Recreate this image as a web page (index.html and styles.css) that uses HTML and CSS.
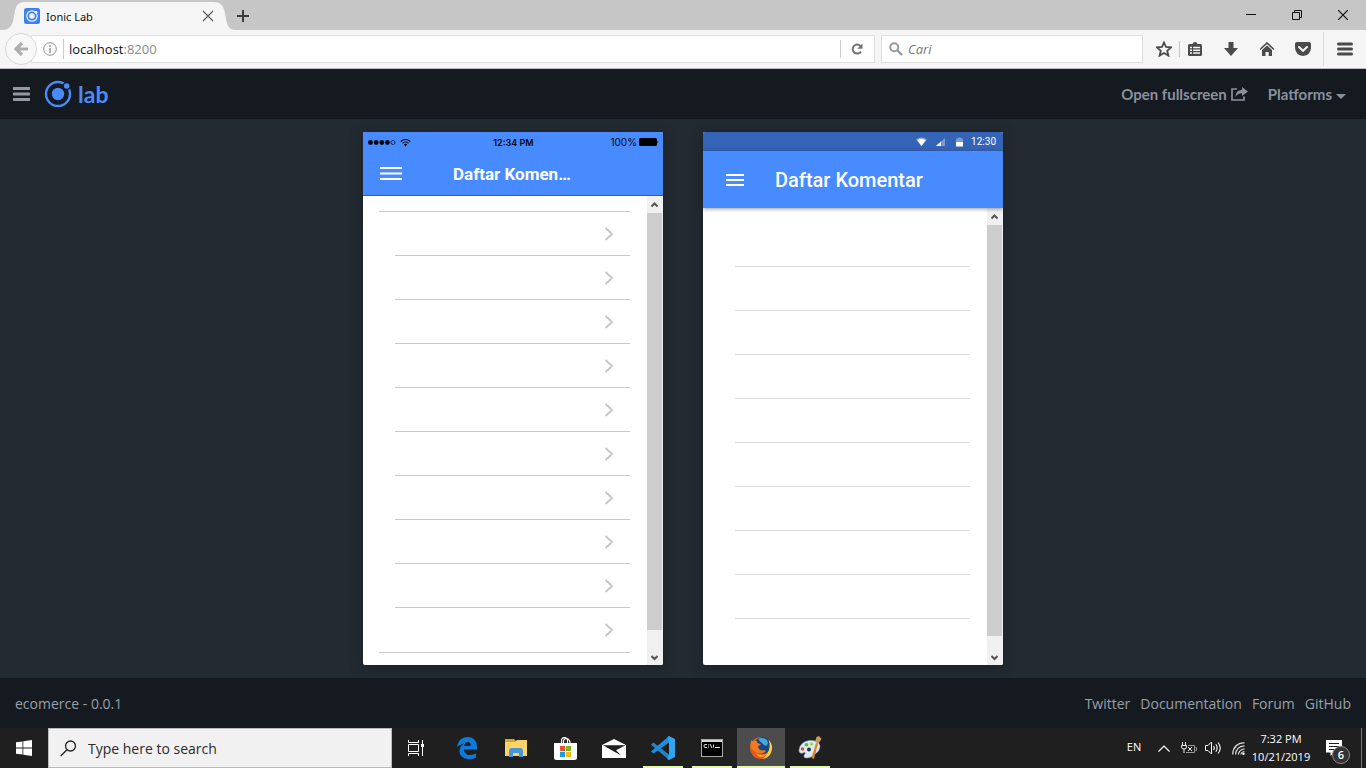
FILE: index.html
```html
<!DOCTYPE html>
<html lang="en">
<head>
<meta charset="utf-8">
<title>Ionic Lab</title>
<link rel="stylesheet" href="styles.css">
</head>
<body>
<div class="screen">
  <header class="browser">
    <div class="tabstrip">
      <div class="tab">
        <svg class="tab-shape" width="236" height="30" viewBox="0 0 236 30"><path d="M0 30C9 30 12 27 13.500 19L15 11C16 5 19 2 25 2H213C220 2 223 5 224.500 11L226 19C227.500 27 230 30 236 30Z" fill="#f5f5f5"/></svg>
        <svg class="favicon" width="16" height="16" viewBox="0 0 16 16"><rect width="16" height="16" rx="2.500" fill="#3b82f0"/><circle cx="8" cy="8" r="5.200" fill="none" stroke="#e4eeff" stroke-width="1.300"/><circle cx="8" cy="8" r="2.700" fill="#fff"/><circle cx="12" cy="4.300" r="1.400" fill="#fff"/></svg>
        <span class="tab-title">Ionic Lab</span>
        <button class="plain tab-close" aria-label="Close tab"><svg width="12" height="12" viewBox="0 0 12 12"><path d="M1 1L11 11M11 1L1 11" stroke="#555" stroke-width="1.100"/></svg></button>
      </div>
      <button class="plain new-tab" aria-label="New tab"><svg width="12" height="12" viewBox="0 0 12 12"><path d="M6 0V12M0 6H12" stroke="#3c3c3c" stroke-width="2"/></svg></button>
      <div class="window-buttons">
        <button class="plain" aria-label="Minimize"><svg width="10" height="10" viewBox="0 0 10 10"><path d="M0 4.500H10" stroke="#111"/></svg></button>
        <button class="plain" aria-label="Restore"><svg width="10" height="10" viewBox="0 0 10 10"><path d="M.5 2.500H7.500V9.500H.5ZM2.500 2.500V.5H9.500V7.500H7.500" fill="none" stroke="#111"/></svg></button>
        <button class="plain" aria-label="Close window"><svg width="10" height="10" viewBox="0 0 10 10"><path d="M0 0L10 10M10 0L0 10" stroke="#111" stroke-width="1.200"/></svg></button>
      </div>
    </div>
    <div class="toolbar">
      <button class="plain back" aria-label="Back"><svg width="14" height="14" viewBox="0 0 14 14"><path d="M8 1L2 7L8 13M2 7H14" fill="none" stroke="#afafaf" stroke-width="3.200"/></svg></button>
      <div class="urlbox">
        <button class="plain info" aria-label="Site information"><svg width="14" height="14" viewBox="0 0 14 14"><circle cx="7" cy="7" r="6.300" fill="none" stroke="#929292"/><path d="M7 6V11M7 3V5" stroke="#929292" stroke-width="1.400"/></svg></button>
        <a class="address" href="#">localhost<span class="port">:8200</span></a>
        <button class="plain reload" aria-label="Reload"><svg width="12" height="12" viewBox="0 0 12 12"><path d="M9.500 3A4.500 4.500 0 1 0 10 8.500" fill="none" stroke="#737373" stroke-width="2"/><path d="M11.500 .5V5.800H6.200Z" fill="#737373"/></svg></button>
      </div>
      <label class="searchbox">
        <svg width="14" height="14" viewBox="0 0 14 14"><circle cx="5.200" cy="5.200" r="4" fill="none" stroke="#999" stroke-width="2"/><path d="M8 8L13 13" stroke="#999" stroke-width="2.400"/></svg>
        <input type="text" placeholder="Cari" aria-label="Cari">
      </label>
      <button class="plain star" aria-label="Bookmark"><svg width="16" height="16" viewBox="0 0 16 16"><path d="M8 1.500L10 6L15 6.400L11.200 9.700L12.400 14.600L8 12L3.600 14.600L4.800 9.700L1 6.400L6 6Z" fill="none" stroke="#4a4a4a" stroke-width="1.800"/></svg></button>
      <span class="rule"></span>
      <button class="plain list-btn" aria-label="Library"><svg width="14" height="14" viewBox="0 0 14 14"><path d="M1.500 2H4.500Q5 0 7 0T9.500 2H12.500Q14 2 14 3.500V12.500Q14 14 12.500 14H1.500Q0 14 0 12.500V3.500Q0 2 1.500 2Z" fill="#4a4a4a"/><path d="M2 5.500H4M5.200 5.500H12M2 8.300H4M5.200 8.300H12M2 11H4M5.200 11H12" stroke="#f5f5f5" stroke-width="1.500"/></svg></button>
      <button class="plain tool" aria-label="Downloads"><svg width="14" height="14" viewBox="0 0 14 14"><path d="M4.500 0H9.500V6H14L7 14L0 6H4.500Z" fill="#4a4a4a"/></svg></button>
      <button class="plain tool" aria-label="Home"><svg width="14" height="14" viewBox="0 0 14 14"><path d="M0 7.500L7 1L14 7.500" fill="none" stroke="#4a4a4a" stroke-width="1.600"/><path d="M2 8L7 3.500L12 8V14H8.700V10H5.500V14H2Z" fill="#4a4a4a"/></svg></button>
      <button class="plain tool" aria-label="Pocket"><svg width="16" height="14" viewBox="0 0 16 14"><path d="M2 0H14Q16 0 16 2V6Q15.500 13 8 14Q.5 13 0 6V2Q0 0 2 0Z" fill="#4a4a4a"/><path d="M4 5L8 8.800L12 5" fill="none" stroke="#f5f5f5" stroke-width="2" stroke-linecap="round"/></svg></button>
      <span class="rule tall"></span>
      <button class="plain menu" aria-label="Open menu"><svg width="16" height="14" viewBox="0 0 16 14"><path d="M1.500 2H14.500M1.500 7H14.500M1.500 12H14.500" stroke="#4a4a4a" stroke-width="3" stroke-linecap="round"/></svg></button>
    </div>
  </header>

  <div class="lab-header">
    <button class="plain lab-menu" aria-label="Toggle sidebar"><svg width="17" height="14" viewBox="0 0 17 14"><path d="M1 1.500H16M1 7H16M1 12.500H16" stroke="#9299a3" stroke-width="3" stroke-linecap="round"/></svg></button>
    <a class="logo" href="#">
      <svg width="28" height="28" viewBox="0 0 28 28"><circle cx="14" cy="14" r="12" fill="none" stroke="#4a8bfc" stroke-width="2.400"/><circle cx="14" cy="14" r="6.200" fill="#4a8bfc"/><circle cx="22.700" cy="6" r="4" fill="#151a21"/><circle cx="22.700" cy="6" r="2.800" fill="#4a8bfc"/></svg>
      <span>lab</span>
    </a>
    <nav class="lab-nav">
      <a href="#">Open fullscreen <svg width="17" height="14" viewBox="0 0 17 14"><path d="M6 2H1V13H13V9.500" fill="none" stroke="#8a919c" stroke-width="1.700"/><path d="M11 0L17 4.600L11 9V6.300Q7 6 4.500 10Q4.500 3.300 11 2.800Z" fill="#8a919c"/></svg></a>
      <a href="#">Platforms <svg class="caret" width="10" height="5" viewBox="0 0 10 5"><path d="M0 0H10L5 5Z" fill="#8a919c"/></svg></a>
    </nav>
  </div>

  <main class="stage">
    <section class="phone ios" aria-label="iOS preview">
      <div class="ios-status">
        <svg class="signal" width="43" height="9" viewBox="0 0 43 9"><g fill="#05070c"><circle cx="2.500" cy="4.500" r="2.400"/><circle cx="8.200" cy="4.500" r="2.400"/><circle cx="13.800" cy="4.500" r="2.400"/><circle cx="19.400" cy="4.500" r="2.400"/></g><circle cx="25" cy="4.500" r="2" fill="none" stroke="#05070c" stroke-width=".7"/><path d="M32.700 3.500Q37.500-.5 42.300 3.500M34.500 5.300Q37.500 2.600 40.500 5.300" fill="none" stroke="#05070c" stroke-width="1.100"/><path d="M35.800 6.600Q37.500 5 39.200 6.600L37.500 8.500Z" fill="#05070c"/></svg>
        <span class="ios-time">12:34 PM</span>
        <span class="ios-battery">100% <svg width="20" height="8" viewBox="0 0 20 8"><rect width="18" height="8" rx="1.500" fill="#000"/><path d="M18.500 2.500Q20 4 18.500 5.500Z" fill="#000"/></svg></span>
      </div>
      <div class="ios-bar">
        <button class="plain" aria-label="Menu"><svg width="22" height="13" viewBox="0 0 22 13"><path d="M0 1H22M0 6.500H22M0 12H22" stroke="#fff" stroke-width="1.800"/></svg></button>
        <h1 title="Daftar Komentar">Daftar Komen…</h1>
      </div>
      <div class="pane">
        <ul class="ios-list">
          <li><a href="#" aria-label="Komentar 1"><svg class="chev" width="10" height="14" viewBox="0 0 10 14"><path d="M1.500 1L8 7L1.500 13"/></svg></a></li>
          <li><a href="#" aria-label="Komentar 2"><svg class="chev" width="10" height="14" viewBox="0 0 10 14"><path d="M1.500 1L8 7L1.500 13"/></svg></a></li>
          <li><a href="#" aria-label="Komentar 3"><svg class="chev" width="10" height="14" viewBox="0 0 10 14"><path d="M1.500 1L8 7L1.500 13"/></svg></a></li>
          <li><a href="#" aria-label="Komentar 4"><svg class="chev" width="10" height="14" viewBox="0 0 10 14"><path d="M1.500 1L8 7L1.500 13"/></svg></a></li>
          <li><a href="#" aria-label="Komentar 5"><svg class="chev" width="10" height="14" viewBox="0 0 10 14"><path d="M1.500 1L8 7L1.500 13"/></svg></a></li>
          <li><a href="#" aria-label="Komentar 6"><svg class="chev" width="10" height="14" viewBox="0 0 10 14"><path d="M1.500 1L8 7L1.500 13"/></svg></a></li>
          <li><a href="#" aria-label="Komentar 7"><svg class="chev" width="10" height="14" viewBox="0 0 10 14"><path d="M1.500 1L8 7L1.500 13"/></svg></a></li>
          <li><a href="#" aria-label="Komentar 8"><svg class="chev" width="10" height="14" viewBox="0 0 10 14"><path d="M1.500 1L8 7L1.500 13"/></svg></a></li>
          <li><a href="#" aria-label="Komentar 9"><svg class="chev" width="10" height="14" viewBox="0 0 10 14"><path d="M1.500 1L8 7L1.500 13"/></svg></a></li>
          <li><a href="#" aria-label="Komentar 10"><svg class="chev" width="10" height="14" viewBox="0 0 10 14"><path d="M1.500 1L8 7L1.500 13"/></svg></a></li>
        </ul>
        <div class="scrollbar" aria-hidden="true">
          <svg width="7" height="17" viewBox="0 0 7 17"><path d="M.5 10.500L3.500 7.500L6.500 10.500" fill="none" stroke="#555" stroke-width="2"/></svg>
          <div class="thumb"></div>
          <svg width="7" height="17" viewBox="0 0 7 17"><path d="M.5 8L3.500 11L6.500 8" fill="none" stroke="#555" stroke-width="2"/></svg>
        </div>
      </div>
    </section>

    <section class="phone md" aria-label="Android preview">
      <div class="md-status">
        <svg width="48" height="10" viewBox="0 0 48 10"><path d="M0 2.500Q5.500-1.500 11 2.500L5.500 9Z" fill="#fff" opacity=".45"/><path d="M1.500 3.200Q5.500 1 9.500 3.200L5.500 9Z" fill="#fff"/><path d="M29 1V9H20Z" fill="#fff" opacity=".35"/><path d="M25 4.500V9H20Z" fill="#fff"/><path d="M42 .5H45V1.500H47V5H40V1.500H42Z" fill="#fff" opacity=".35"/><rect x="40" y="5" width="7" height="4.500" fill="#fff"/></svg>
        <span>12:30</span>
      </div>
      <div class="md-bar">
        <button class="plain" aria-label="Menu"><svg width="18" height="12" viewBox="0 0 18 12"><path d="M0 1H18M0 6H18M0 11H18" stroke="#fff" stroke-width="2"/></svg></button>
        <h1>Daftar Komentar</h1>
      </div>
      <div class="pane">
        <ul class="md-list">
          <li></li><li></li><li></li><li></li><li></li><li></li><li></li><li></li><li></li><li></li>
        </ul>
        <div class="scrollbar" aria-hidden="true">
          <svg width="7" height="17" viewBox="0 0 7 17"><path d="M.5 10.500L3.500 7.500L6.500 10.500" fill="none" stroke="#555" stroke-width="2"/></svg>
          <div class="thumb"></div>
          <svg width="7" height="17" viewBox="0 0 7 17"><path d="M.5 8L3.500 11L6.500 8" fill="none" stroke="#555" stroke-width="2"/></svg>
        </div>
      </div>
    </section>
  </main>

  <footer class="lab-footer">
    <span>ecomerce - 0.0.1</span>
    <nav><a href="#">Twitter</a><a href="#">Documentation</a><a href="#">Forum</a><a href="#">GitHub</a></nav>
  </footer>

  <div class="taskbar">
    <button class="plain start" aria-label="Start"><svg width="16" height="16" viewBox="0 0 16 16"><path d="M0 2.300L6.500 1.400V7.500H0ZM7.300 1.300L16 0V7.500H7.300ZM0 8.400H6.500V14.600L0 13.700ZM7.300 8.400H16V16L7.300 14.700Z" fill="#fff"/></svg></button>
    <label class="task-search">
      <svg width="17" height="17" viewBox="0 0 17 17"><circle cx="10.500" cy="6" r="5" fill="none" stroke="#222" stroke-width="1.300"/><path d="M7 9.700L.7 16" stroke="#222" stroke-width="1.300"/></svg>
      <input type="text" placeholder="Type here to search" aria-label="Type here to search">
    </label>
    <div class="apps">
      <button class="plain app" aria-label="Task View"><svg width="16" height="16" viewBox="0 0 16 16"><path d="M.5 0V2.500H10.500V0M.5 16V13.500H10.500V16M.5 4.500H10.500V11.500H.5ZM14.500 0V16" fill="none" stroke="#fff"/><rect x="13" y="4" width="3" height="3" fill="#fff"/></svg></button>
      <button class="plain app" aria-label="Edge"><svg width="20" height="22" viewBox="0 0 20 22"><path d="M0 10C1 3.500 5 0 10.500 0C17 0 20 4.500 20 10V12.500H7C7 16 10 18 13 18C15.500 18 17.500 17.200 19 16.300V20.500C17 21.500 14.500 22 12 22C6 22 2.500 18.500 2.500 14C2.500 10.500 4.500 8 7.500 6.500C4 7 1.500 8.500 0 10ZM7.200 9H13.800C13.800 6.500 12.500 5 10.600 5C8.500 5 7.300 7 7.200 9Z" fill="#0c7bdc"/></svg></button>
      <button class="plain app" aria-label="File Explorer"><svg width="22" height="18" viewBox="0 0 22 18"><path d="M0 0H9L11 2H22V17H0Z" fill="#e2a326"/><path d="M0 3H10L12 1H22V17H0Z" fill="#fbd469"/><path d="M4 18V12Q4 9 7 9H15Q18 9 18 12V18H14V14H8V18Z" fill="#4797d3"/></svg></button>
      <button class="plain app" aria-label="Store"><svg width="23" height="23" viewBox="0 0 23 23"><path d="M7.500 6V4Q7.500 .7 10.500 .7T13.500 4V6M9.500 6V4Q10 1.500 12.500 1.500T16 5V6" fill="none" stroke="#fff" stroke-width="1.200"/><path d="M0 6H23V20.500Q23 23 20.500 23H2.500Q0 23 0 20.500Z" fill="#fff"/><path d="M6 9H11V14H6Z" fill="#e8502f"/><path d="M12 9H17V14H12Z" fill="#7eb51b"/><path d="M6 15H11V20H6Z" fill="#1a9de2"/><path d="M12 15H17V20H12Z" fill="#fdb913"/></svg></button>
      <button class="plain app" aria-label="Mail"><svg width="24" height="19" viewBox="0 0 24 19"><path d="M0 6L12 0L24 6V19H0Z" fill="#fff"/><path d="M1 6.300H23.500L14 11.300L19 16.300L11 12Z" fill="#1f1f1f"/></svg></button>
      <button class="plain app running" aria-label="Visual Studio Code"><svg width="24" height="24" viewBox="0 0 24 24"><path d="M0 8.500L2.500 6.500L18 18.500V24L1 9.500Z" fill="#1c85cc"/><path d="M0 15.500L18 0V6.500L2.500 17.500Z" fill="#1b8fdc"/><path d="M18 0L24 3V21L18 24L16.500 23.200L18 18.500V6L16.500 1.200Z" fill="#32a5ee"/></svg></button>
      <button class="plain app running" aria-label="Command Prompt"><svg width="22" height="18" viewBox="0 0 22 18"><rect x=".5" y=".5" width="21" height="17" fill="#000" stroke="#aaa"/><rect x="1" y="1" width="20" height="2" fill="#d6d6d6"/><path d="M6 5.500H4Q3 5.500 3 7T4 8.500H6M7.500 5.500V6.500M7.500 7.500V8.500M9 5L11 9M12.500 5.500V8.500M14 8.500H19" fill="none" stroke="#ddd"/></svg></button>
      <button class="plain app running active" aria-label="Firefox"><svg width="24" height="24" viewBox="0 0 24 24"><circle cx="12" cy="12" r="11" fill="#e55a1c"/><circle cx="13.500" cy="9.500" r="8.600" fill="#174780"/><path d="M9 3Q13 .5 18 4Q20 8 17 10Q13 8 9 3Z" fill="#45a9dc"/><path d="M2.500 4L4 5.500Q6 4.500 7.500 4.500L8.500 7L12 8.500Q10 9.500 9 10.500Q9.500 14 13 14.500Q16 14 17 15Q14 19 9 17Q3 15 1.500 10Q1.500 6 2.500 4Z" fill="#f07a1d"/><path d="M19.500 3.500Q23.500 8 23 13Q22 21 14 23Q20 17 20.500 11Q21 7 19.500 3.500Z" fill="#ffcf32"/><path d="M7 17Q13 21 18 17Q16 21 11 21Q8 20 7 17Z" fill="#f6a11f"/></svg></button>
      <button class="plain app running" aria-label="Paint"><svg width="24" height="24" viewBox="0 0 24 24"><path d="M1 14Q2 6 11 4.500Q21 4 22 10Q22 15 17 18Q13 22 9 22Q4 22 7 18Q8 15 5 17Q1 18 1 14Z" fill="#dcecf6" stroke="#86aac4" stroke-width=".6"/><circle cx="4.500" cy="13" r="1.800" fill="#e4483d"/><circle cx="8.500" cy="8.800" r="1.800" fill="#55b848"/><circle cx="13.500" cy="8" r="1.800" fill="#b8cf4a"/><circle cx="11" cy="13.500" r="2" fill="#273440"/><path d="M13.500 22L18 7L20 7.500L16 23Z" fill="#d9822a"/><path d="M17 6L18.500 1L21 0L23.500 3L20.500 7.500Z" fill="#c89b63"/></svg></button>
    </div>
    <div class="tray">
      <button class="plain lang">EN</button>
      <button class="plain tray-btn" aria-label="Show hidden icons"><svg width="12" height="7" viewBox="0 0 12 7"><path d="M.5 6.500L6 1L11.500 6.500" fill="none" stroke="#fff" stroke-width="1.200"/></svg></button>
      <button class="plain tray-btn" aria-label="Battery"><svg width="16" height="12" viewBox="0 0 16 12"><path d="M13.500 3.500H7M5 10.500H13.500V3.500M14.500 5.500H15.500V8.500H14.500" fill="none" stroke="#999"/><path d="M1.500 0V3M4.500 0V3M.5 3.500H5.500V5Q5.500 7 3 7T.5 5ZM3 7V11M7 5L11 9M11 5L7 9" fill="none" stroke="#eee"/></svg></button>
      <button class="plain tray-btn" aria-label="Volume"><svg width="17" height="14" viewBox="0 0 17 14"><path d="M.5 4.500H3L6.500 1V13L3 9.500H.5Z" fill="none" stroke="#fff"/><path d="M8.500 5Q10 7 8.500 9M10.800 3.300Q13.500 7 10.800 10.700M13 1.500Q17.500 7 13 12.500" fill="none" stroke="#fff" stroke-width="1.100"/></svg></button>
      <button class="plain tray-btn" aria-label="Wi-Fi"><svg width="13" height="13" viewBox="0 0 13 13"><path d="M.7 12.500Q1 1.500 12.500 .7M3.500 12.500Q4 4.500 12.500 3.800M6.300 12.500Q7 7.500 12.500 6.800M9 12.500Q9 10 12.500 9.500" fill="none" stroke="#d6d6d6" stroke-width="1.200"/><circle cx="11.500" cy="11.800" r="1.200" fill="#fff"/></svg></button>
      <button class="plain clock"><span>7:32 PM</span><span>10/21/2019</span></button>
      <button class="plain notes" aria-label="Notifications, 6 new"><svg width="16" height="16" viewBox="0 0 16 16"><path d="M0 0H16V12.500H8L4.500 16V12.500H0Z" fill="#fff"/><path d="M3 3.500H13M3 6.500H13M3 9.500H9" stroke="#1f1f1f"/></svg><span class="badge">6</span></button>
      <span class="peek"></span>
    </div>
  </div>
</div>
</body>
</html>
```
FILE: styles.css
```css
* { box-sizing: border-box; }
body { margin: 0; font-family: "Open Sans", "Noto Sans", sans-serif; font-size: 12px; }
a { color: inherit; text-decoration: none; }
svg { display: block; flex: none; }
ul { list-style: none; margin: 0; padding: 0; }
h1 { margin: 0; }
.plain { border: 0; padding: 0; margin: 0; background: none; color: inherit; font: inherit; display: flex; align-items: center; justify-content: center; }
.screen { min-height: 100vh; display: flex; flex-direction: column; background: #232a31; }

/* Browser chrome */
.tabstrip { height: 30px; background: #c6c6c6; display: flex; }
.tab { position: relative; width: 236px; padding: 2px 22px 0 24px; display: flex; align-items: center; }
.tab-shape { position: absolute; left: 0; top: 0; }
.favicon, .tab-title, .tab-close { position: relative; }
.tab-title { flex: 1; margin-left: 6px; color: #111; font-family: "Noto Sans", sans-serif; font-size: 11px; }
.tab-close { width: 12px; }
.new-tab { width: 14px; padding-top: 2px; }
.window-buttons { margin-left: auto; display: flex; }
.window-buttons button { width: 46px; }
.toolbar { height: 39px; background: #f5f5f5; border-bottom: 1px solid #bcbcbc; display: flex; align-items: center; }
.back { position: relative; width: 32px; height: 32px; margin-left: 5px; border: 1px solid #d8d8d8; border-radius: 50%; background: #f8f8f8; flex: none; }
.urlbox { flex: 1; height: 28px; margin-left: -6px; padding-left: 8px; background: #fff; border: 1px solid #dedede; display: flex; align-items: center; }
.info { width: 24px; height: 20px; border-right: 1px solid #ccc; padding-right: 4px; }
.address { flex: 1; margin-left: 5px; font-size: 13px; color: #111; }
.port { color: #8a8a8a; }
.reload { width: 34px; height: 18px; border-left: 1px solid #ccc; padding-right: 2px; }
.searchbox { width: 262px; height: 28px; margin-left: 6px; padding: 0 7px; background: #fff; border: 1px solid #dedede; display: flex; align-items: center; gap: 5px; }
.searchbox input { flex: 1; min-width: 0; border: 0; padding: 0; background: none; font: italic 13px "Open Sans", sans-serif; }
.searchbox input::placeholder { color: #777; opacity: 1; }
.star { width: 30px; margin-left: 6px; }
.rule { width: 1px; height: 16px; background: #c4c4c4; }
.tall { height: 34px; margin-left: 2px; background: #dcdcdc; }
.list-btn { width: 30px; margin-right: 3px; }
.tool { width: 36px; }
.menu { width: 42px; }

/* Lab header and footer */
.lab-header { height: 50px; background: #151a21; color: #8a919c; display: flex; align-items: center; padding: 0 20px 0 13px; }
.logo { display: flex; align-items: center; gap: 6px; margin-left: 14px; color: #4a8bfc; font: bold 23px Lato, sans-serif; }
.lab-nav { margin-left: auto; display: flex; gap: 20px; font: bold 15px Lato, sans-serif; }
.lab-nav a { display: flex; align-items: center; gap: 4px; }
.caret { margin-top: 5px; }
.lab-footer { height: 50px; background: #151a21; color: #98a0aa; padding: 0 15px; display: flex; align-items: center; justify-content: space-between; font: 14px "Open Sans", sans-serif; }
.lab-footer nav { display: flex; gap: 10px; }

/* Device previews */
.stage { flex: 1; display: flex; justify-content: center; gap: 40px; padding: 13px 20px; }
.phone { width: 300px; background: #fff; border-radius: 2px; overflow: hidden; display: flex; flex-direction: column; box-shadow: 0 2px 12px #1a1f26; font-family: Roboto, sans-serif; }
.ios-status { height: 20px; background: #488aff; color: #05070c; padding: 0 4px 0 5px; display: grid; grid-template-columns: 1fr auto 1fr; align-items: center; font: 10px Inter, sans-serif; }
.ios-time { font-weight: 600; font-size: 9px; }
.ios-battery { display: flex; align-items: center; justify-content: flex-end; gap: 2px; }
.ios-bar { height: 44px; background: #488aff; border-bottom: 1px solid #2f5fb8; color: #fff; display: grid; grid-template-columns: 90px auto 1fr; align-items: center; }
.ios-bar button { width: 56px; }
.ios-bar h1 { font-size: 17px; font-weight: 700; line-height: 20px; white-space: nowrap; }
.pane { flex: 1; display: flex; }
.ios-list { flex: 1; align-self: flex-start; margin: 15px 17px 12px 16px; border-top: 1px solid #c8c7cc; border-bottom: 1px solid #c8c7cc; }
.ios-list li { margin-left: 16px; height: 44px; border-bottom: 1px solid #c8c7cc; }
.ios-list li:last-child { border-bottom: 0; }
.ios-list a { height: 100%; padding-right: 16px; display: flex; align-items: center; justify-content: flex-end; }
.chev path { fill: none; stroke: #c8c8cc; stroke-width: 2; }
.scrollbar { width: 16px; padding-right: 1px; background: #f0f0f0; display: flex; flex-direction: column; align-items: center; }
.thumb { flex: 1; align-self: stretch; margin-bottom: 18px; background: #cdcdcd; }
.md .thumb { margin-bottom: 12px; }
.md-status { height: 19px; background: #3464b8; color: #fff; padding: 0 7px; display: flex; align-items: center; justify-content: flex-end; gap: 7px; font-size: 10px; }
.md-bar { position: relative; height: 57px; background: #488aff; color: #fff; display: flex; align-items: center; padding: 1px 0 0 23px; box-shadow: 0 1px 4px #0006; }
.md-bar h1 { margin-left: 31px; font-size: 20px; font-weight: 500; }
.md-list { flex: 1; margin: 15px 17px 0 32px; }
.md-list li { height: 44px; border-bottom: 1px solid #dedede; }
.md-list li:last-child { height: 0; border-bottom: 0; }

/* Desktop taskbar */
.taskbar { height: 40px; background: #1f1f1f; color: #fff; display: flex; }
.start { width: 48px; }
.task-search { width: 344px; background: #f1f1f1; border: 1px solid #b9b9b9; padding: 0 11px; display: flex; align-items: center; gap: 11px; }
.task-search input { flex: 1; border: 0; padding: 0; background: none; font: 14px "Open Sans", sans-serif; }
.task-search input::placeholder { color: #2b2b2b; opacity: 1; }
.apps { display: flex; gap: 1px; }
.app { position: relative; width: 48px; }
.app:first-child { margin-right: 2px; }
.running::after { content: ""; position: absolute; left: 4px; right: 4px; bottom: 0; height: 2px; background: #e3f8ac; }
.active { background: #4c4c4c; }
.active::after { left: 0; right: 0; }
.tray { margin-left: auto; display: flex; }
.lang { width: 34px; font-size: 11px; padding-bottom: 4px; }
.tray-btn { width: 25px; }
.clock { width: 60px; flex-direction: column; font-size: 11px; line-height: 18px; }
.notes { position: relative; width: 46px; }
.badge { position: absolute; left: 21px; bottom: 4px; width: 18px; height: 18px; border-radius: 50%; border: 1px solid #8a8a8a; background: #333; font-size: 11px; font-weight: 600; line-height: 16px; }
.peek { width: 1px; margin: 0 4px; background: #777; }
```
